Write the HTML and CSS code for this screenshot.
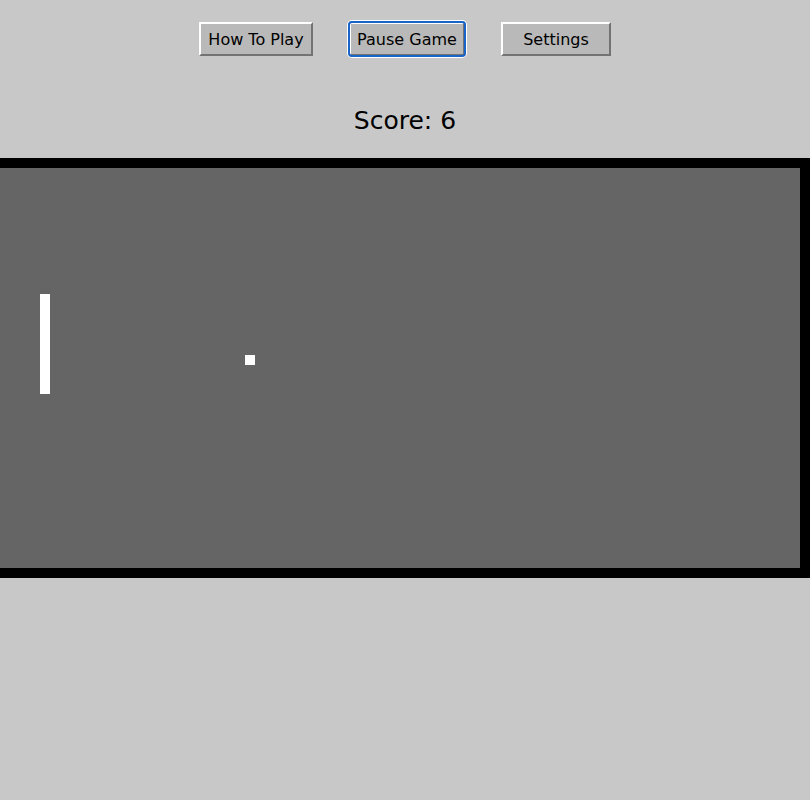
FILE: index.html
```html
<!DOCTYPE html>
<html lang="en">
<head>
<meta charset="utf-8">
<title>Pong</title>
<link rel="stylesheet" href="styles.css">
</head>
<body>
  <div class="controls">
    <button class="btn btn-how">How To Play</button>
    <button class="btn btn-pause is-focused">Pause Game</button>
    <button class="btn btn-settings">Settings</button>
  </div>
  <div class="score">Score: 6</div>
  <div class="board">
    <div class="paddle"></div>
    <div class="ball"></div>
  </div>
</body>
</html>
```

FILE: styles.css
```css
html, body {
  margin: 0;
  padding: 0;
  background: #c8c8c8;
  overflow: hidden;
}

body {
  font-family: "DejaVu Sans", Verdana, sans-serif;
  color: #000;
}

.controls {
  display: flex;
  justify-content: center;
  gap: 36px;
  padding-top: 22px;
}

.btn {
  position: relative;
  box-sizing: border-box;
  height: 34px;
  padding: 0;
  border: 2px solid;
  border-color: #ffffff #737373 #737373 #ffffff;
  background: #b9b9b9;
  font-family: "DejaVu Sans", Verdana, sans-serif;
  font-size: 16px;
  color: #000;
  cursor: pointer;
}

.btn-how { width: 114px; }
.btn-pause { width: 116px; }
.btn-settings { width: 110px; }

.is-focused::after {
  content: "";
  position: absolute;
  inset: -3px;
  border: 2px solid #1964c8;
  border-radius: 4px;
  box-shadow: 0 0 0 1px #ffffff;
  pointer-events: none;
}

.score {
  margin-top: 50px;
  height: 30px;
  line-height: 30px;
  font-size: 25px;
  text-align: center;
}

.board {
  position: relative;
  margin-top: 22px;
  width: 800px;
  height: 400px;
  border: 10px solid #000;
  border-left: 0;
  background: #656565;
}

.paddle {
  position: absolute;
  left: 40px;
  top: 126px;
  width: 10px;
  height: 100px;
  background: #fff;
}

.ball {
  position: absolute;
  left: 245px;
  top: 187px;
  width: 10px;
  height: 10px;
  background: #fff;
}
```
